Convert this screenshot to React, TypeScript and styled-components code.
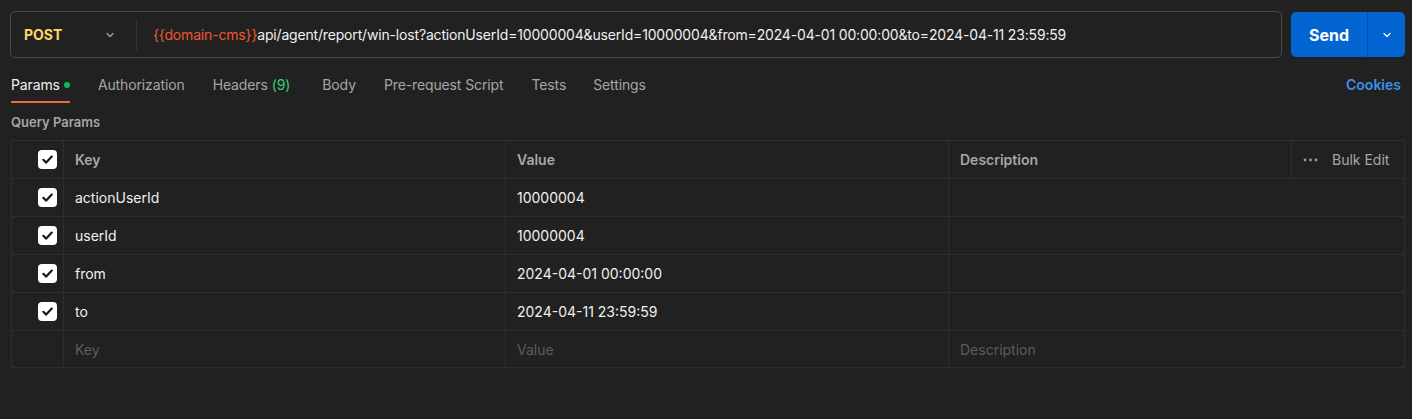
import React from "react";
import styled, { createGlobalStyle } from "styled-components";

const Global = createGlobalStyle`
  html, body { margin: 0; padding: 0; background: #212121; }
  body { font-family: Inter, "Noto Sans", sans-serif; color: #ffffff; -webkit-font-smoothing: antialiased; }
  * { box-sizing: border-box; }
`;

const Page = styled.div`
  width: 1412px;
  height: 419px;
  background: #212121;
  padding: 11px 7px 0 10px;
  display: flex;
  flex-direction: column;
`;

const TopBar = styled.div`
  display: flex;
  gap: 9px;
  height: 47px;
`;

const UrlBox = styled.div`
  flex: 1;
  display: flex;
  align-items: center;
  border: 1px solid #4a4a4a;
  border-radius: 5px;
  background: #212121;
`;

const Method = styled.div`
  width: 126px;
  display: flex;
  align-items: center;
  justify-content: space-between;
  padding: 0 20px 0 13px;
  height: 32px;
  border-right: 1px solid #333333;
  font-weight: 700;
  font-size: 14px;
  color: #ffd766;
`;

const UrlText = styled.div`
  padding-left: 16px;
  font-size: 14px;
  color: #f0f0f0;
  white-space: nowrap;
  letter-spacing: -0.17px;
`;

const Var = styled.span`
  color: #f0572f;
`;

const SendGroup = styled.div`
  display: flex;
  width: 114px;
  height: 45px;
  margin-top: 1px;
  border-radius: 5px;
  overflow: hidden;
  background: #0265d2;
`;

const SendMain = styled.div`
  width: 77px;
  display: flex;
  align-items: center;
  justify-content: center;
  font-weight: 700;
  font-size: 16px;
  color: #ffffff;
  border-right: 1px solid #0152ad;
`;

const SendArrow = styled.div`
  flex: 1;
  display: flex;
  align-items: center;
  justify-content: center;
`;

const Tabs = styled.div`
  display: flex;
  align-items: flex-start;
  margin-top: 18px;
  padding-left: 1px;
  height: 35px;
`;

const Tab = styled.div<{ $active?: boolean; $gap: number }>`
  font-size: 14px;
  letter-spacing: -0.12px;
  color: ${(p) => (p.$active ? "#f0f0f0" : "#a6a6a6")};
  margin-right: ${(p) => p.$gap}px;
  padding-bottom: 8px;
  border-bottom: 2px solid ${(p) => (p.$active ? "#f26b3a" : "transparent")};
  display: flex;
  align-items: center;
  gap: 4px;
  line-height: 17px;
`;

const Dot = styled.span`
  width: 6px;
  height: 6px;
  border-radius: 50%;
  background: #0cbb52;
`;

const Green = styled.span`
  color: #3fc97a;
`;

const Cookies = styled.div`
  margin-left: auto;
  margin-right: 4px;
  font-size: 14px;
  font-weight: 600;
  color: #3d8ee8;
  line-height: 17px;
`;

const SectionTitle = styled.div`
  font-size: 13px;
  font-weight: 600;
  color: #a6a6a6;
  margin: 3px 0 10px 1px;
  line-height: 16px;
`;

const Table = styled.div`
  margin-left: 1px;
  width: 1394px;
  border: 1px solid #2e2e2e;
  display: grid;
  grid-template-columns: 52px 442px 443px 343px 1fr;
`;

const Cell = styled.div<{ $span?: number; $muted?: boolean; $head?: boolean; $last?: boolean; $end?: boolean }>`
  height: ${(p) => (p.$end ? 36 : 38)}px;
  display: flex;
  align-items: center;
  padding-left: 11px;
  font-size: 14px;
  font-weight: ${(p) => (p.$head ? 600 : 400)};
  color: ${(p) => (p.$head ? "#a6a6a6" : p.$muted ? "#5c5c5c" : "#f0f0f0")};
  border-right: ${(p) => (p.$last ? "none" : "1px solid #2e2e2e")};
  border-bottom: ${(p) => (p.$end ? "none" : "1px solid #2e2e2e")};
  grid-column: span ${(p) => p.$span ?? 1};
`;

const CheckCell = styled(Cell)`
  padding-left: 26px;
`;

const Box = styled.div`
  width: 19px;
  height: 19px;
  border-radius: 4px;
  background: #ffffff;
  display: flex;
  align-items: center;
  justify-content: center;
`;

const BulkCell = styled(Cell)`
  padding-left: 11px;
  gap: 14px;
  color: #a6a6a6;
  font-weight: 400;
`;

const Chevron = ({ color = "#a6a6a6" }: { color?: string }) => (
  <svg width="12" height="12" viewBox="0 0 12 12" fill="none">
    <path d="M3 4.5 L6 7.5 L9 4.5" stroke={color} strokeWidth="1.2" strokeLinecap="round" strokeLinejoin="round" />
  </svg>
);

const Check = () => (
  <Box>
    <svg width="13" height="13" viewBox="0 0 13 13" fill="none">
      <path d="M2.3 6.8 L5.2 9.6 L10.8 3.6" stroke="#1a1a1a" strokeWidth="2.2" strokeLinecap="round" strokeLinejoin="round" />
    </svg>
  </Box>
);

const Dots = () => (
  <svg width="15" height="4" viewBox="0 0 15 4">
    <circle cx="2" cy="2" r="1.4" fill="#9a9a9a" />
    <circle cx="7.5" cy="2" r="1.4" fill="#9a9a9a" />
    <circle cx="13" cy="2" r="1.4" fill="#9a9a9a" />
  </svg>
);

const rows = [
  { key: "actionUserId", value: "10000004" },
  { key: "userId", value: "10000004" },
  { key: "from", value: "2024-04-01 00:00:00" },
  { key: "to", value: "2024-04-11 23:59:59" },
];

export default function App() {
  return (
    <Page>
      <Global />
      <TopBar>
        <UrlBox>
          <Method>
            POST
            <Chevron />
          </Method>
          <UrlText>
            <Var>{"{{domain-cms}}"}</Var>
            api/agent/report/win-lost?actionUserId=10000004&amp;userId=10000004&amp;from=2024-04-01 00:00:00&amp;to=2024-04-11 23:59:59
          </UrlText>
        </UrlBox>
        <SendGroup>
          <SendMain>Send</SendMain>
          <SendArrow>
            <Chevron color="#ffffff" />
          </SendArrow>
        </SendGroup>
      </TopBar>

      <Tabs>
        <Tab $active $gap={28}>
          Params <Dot />
        </Tab>
        <Tab $gap={28}>Authorization</Tab>
        <Tab $gap={32}>
          Headers <Green>(9)</Green>
        </Tab>
        <Tab $gap={28}>Body</Tab>
        <Tab $gap={28}>Pre-request Script</Tab>
        <Tab $gap={27}>Tests</Tab>
        <Tab $gap={0}>Settings</Tab>
        <Cookies>Cookies</Cookies>
      </Tabs>

      <SectionTitle>Query Params</SectionTitle>

      <Table>
        <CheckCell $head>
          <Check />
        </CheckCell>
        <Cell $head>Key</Cell>
        <Cell $head>Value</Cell>
        <Cell $head>Description</Cell>
        <BulkCell $last>
          <Dots />
          Bulk Edit
        </BulkCell>
        {rows.map((r) => (
          <React.Fragment key={r.key}>
            <CheckCell>
              <Check />
            </CheckCell>
            <Cell>{r.key}</Cell>
            <Cell>{r.value}</Cell>
            <Cell $span={2} $last />
          </React.Fragment>
        ))}
        <CheckCell $end />
        <Cell $muted $end>
          Key
        </Cell>
        <Cell $muted $end>
          Value
        </Cell>
        <Cell $muted $span={2} $last $end>
          Description
        </Cell>
      </Table>
    </Page>
  );
}
